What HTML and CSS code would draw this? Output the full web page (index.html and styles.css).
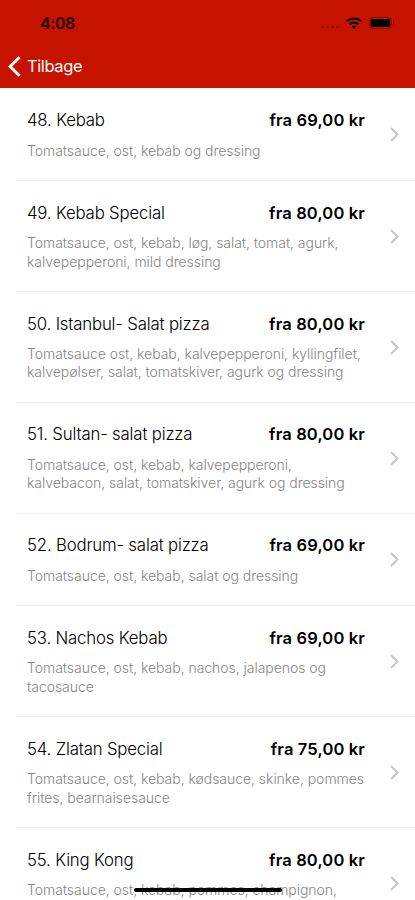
FILE: index.html
```html
<!DOCTYPE html>
<html lang="da">
<head>
<meta charset="utf-8">
<meta name="viewport" content="width=device-width, initial-scale=1">
<title>Menu</title>
<link rel="stylesheet" href="styles.css">
</head>
<body>
<div class="screen">
  <header class="header">
    <div class="status">
      <span class="time">4:08</span>
      <div class="indicators">
        <span class="signal"><i></i><i></i><i></i><i></i></span>
        <svg class="wifi" width="16" height="12" viewBox="0 0 16 12" fill="none" stroke="#000" stroke-width="2"><path d="M.8 4.4C4.8.4 11.2.4 15.2 4.4M3.6 7.3c2.5-2.4 6.3-2.4 8.8 0"/><path d="M5.7 9.5c1.3-1.2 3.3-1.2 4.6 0L8 12z" fill="#000" stroke="none"/></svg>
        <svg class="battery" width="26" height="12" viewBox="0 0 26 12"><rect x=".5" y=".5" width="22" height="11" rx="2.5" fill="none" stroke="#000" stroke-opacity=".25"/><rect x="1.7" y="2" width="19.5" height="8" rx="1" fill="#000"/><path d="M24 4c1.7.6 1.7 3.4 0 4z" fill="#000" fill-opacity=".4"/></svg>
      </div>
    </div>
    <div class="nav">
      <svg width="13" height="21" viewBox="0 0 13 21" fill="none" stroke="#fff" stroke-width="3"><path d="M11.6 1.2 2.2 10.5l9.4 9.3"/></svg>
      <span class="back">Tilbage</span>
    </div>
  </header>
  <main class="list">
    <article class="row"><div class="body"><div class="top"><h2>48. Kebab</h2><strong>fra 69,00 kr</strong></div><p>Tomatsauce, ost, kebab og dressing</p></div><svg class="chev" viewBox="0 0 9 15"><path d="m1 1 6.5 6.5L1 14"/></svg></article>
    <article class="row"><div class="body"><div class="top"><h2>49. Kebab Special</h2><strong>fra 80,00 kr</strong></div><p>Tomatsauce, ost, kebab, løg, salat, tomat, agurk,<br>kalvepepperoni, mild dressing</p></div><svg class="chev" viewBox="0 0 9 15"><path d="m1 1 6.5 6.5L1 14"/></svg></article>
    <article class="row"><div class="body"><div class="top"><h2>50. Istanbul- Salat pizza</h2><strong>fra 80,00 kr</strong></div><p>Tomatsauce ost, kebab, kalvepepperoni, kyllingfilet,<br>kalvepølser, salat, tomatskiver, agurk og dressing</p></div><svg class="chev" viewBox="0 0 9 15"><path d="m1 1 6.5 6.5L1 14"/></svg></article>
    <article class="row"><div class="body"><div class="top"><h2>51. Sultan- salat pizza</h2><strong>fra 80,00 kr</strong></div><p>Tomatsauce, ost, kebab, kalvepepperoni,<br>kalvebacon, salat, tomatskiver, agurk og dressing</p></div><svg class="chev" viewBox="0 0 9 15"><path d="m1 1 6.5 6.5L1 14"/></svg></article>
    <article class="row"><div class="body"><div class="top"><h2>52. Bodrum- salat pizza</h2><strong>fra 69,00 kr</strong></div><p>Tomatsauce, ost, kebab, salat og dressing</p></div><svg class="chev" viewBox="0 0 9 15"><path d="m1 1 6.5 6.5L1 14"/></svg></article>
    <article class="row"><div class="body"><div class="top"><h2>53. Nachos Kebab</h2><strong>fra 69,00 kr</strong></div><p>Tomatsauce, ost, kebab, nachos, jalapenos og<br>tacosauce</p></div><svg class="chev" viewBox="0 0 9 15"><path d="m1 1 6.5 6.5L1 14"/></svg></article>
    <article class="row"><div class="body"><div class="top"><h2>54. Zlatan Special</h2><strong>fra 75,00 kr</strong></div><p>Tomatsauce, ost, kebab, kødsauce, skinke, pommes<br>frites, bearnaisesauce</p></div><svg class="chev" viewBox="0 0 9 15"><path d="m1 1 6.5 6.5L1 14"/></svg></article>
    <article class="row"><div class="body"><div class="top"><h2>55. King Kong</h2><strong>fra 80,00 kr</strong></div><p>Tomatsauce, ost, kebab, pommes, champignon,<br>&nbsp;</p></div><svg class="chev" viewBox="0 0 9 15"><path d="m1 1 6.5 6.5L1 14"/></svg></article>
  </main>
  <div class="home"></div>
</div>
</body>
</html>
```
FILE: styles.css
```css
* { box-sizing: border-box; }
body { margin: 0; background: #fff; font-family: Inter, "Liberation Sans", sans-serif; }
.screen { position: relative; height: 900px; overflow: hidden; background: #fff; }
.header { height: 88.4px; background: #c51300; }
.status { height: 45px; display: flex; justify-content: space-between; align-items: center; padding: 0 20px 0 40px; }
.time { font-size: 16px; font-weight: 600; letter-spacing: -.4px; color: #200; }
.indicators { display: flex; align-items: center; }
.signal { display: flex; gap: 2px; margin: 8px 7px 0 0; }
.signal i { width: 3px; height: 2px; background: #000; opacity: .16; }
.wifi { margin-right: 7px; }
.nav { height: 42px; display: flex; align-items: center; gap: 6px; padding-left: 8px; }
.back { font-size: 16.5px; color: #fff; letter-spacing: -.4px; }
.row { display: flex; align-items: center; margin-left: 16px; padding: 20.7px 16px 20px 11px; border-bottom: 1px solid #eee; }
.body { width: 338px; flex: none; }
.top { display: flex; justify-content: space-between; height: 23px; line-height: 23px; margin-bottom: 9.6px; }
h2 { margin: 0; font-size: 16.8px; font-weight: 300; color: #000; letter-spacing: -.18px; white-space: nowrap; }
strong { font-size: 16.5px; font-weight: 600; color: #000; letter-spacing: .15px; white-space: nowrap; }
p { margin: 0; font-size: 14px; line-height: 18.3px; font-weight: 300; color: #858585; letter-spacing: -.04px; white-space: nowrap; }
.chev { width: 9px; height: 15px; margin-left: auto; fill: none; stroke: #c4c4c6; stroke-width: 1.8; }
.home { position: absolute; left: 134px; top: 888px; width: 148px; height: 4px; border-radius: 2px; background: #000; }
```
